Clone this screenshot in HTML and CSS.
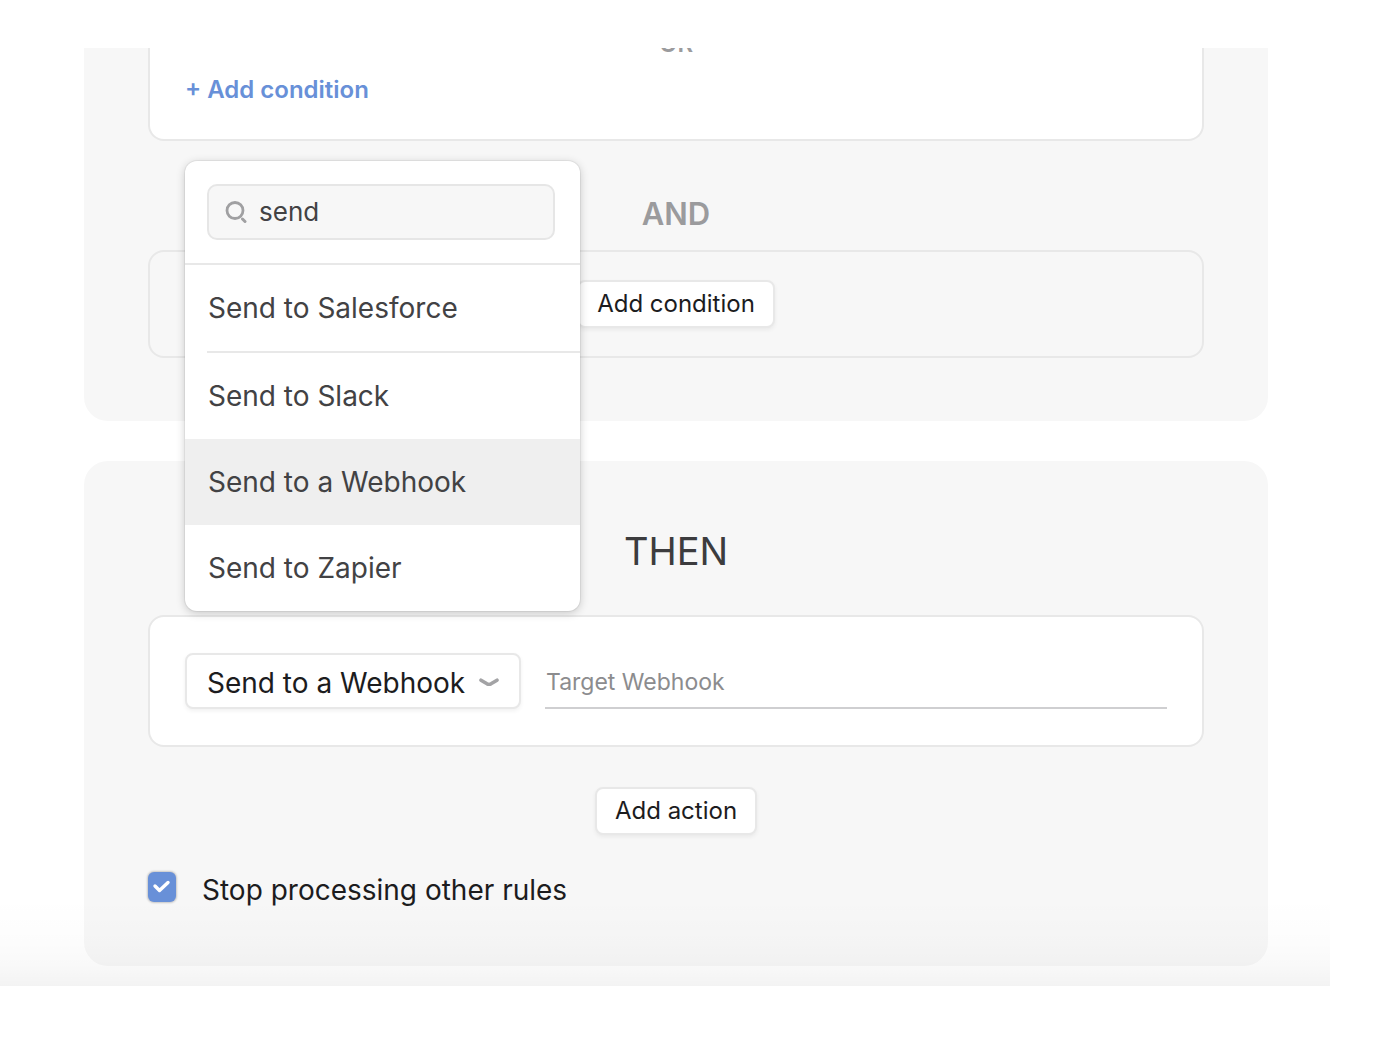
FILE: index.html
```
<!DOCTYPE html>
<html lang="en">
<head>
    <meta charset="UTF-8">
    <meta name="viewport" content="width=device-width, initial-scale=1.0">
    <title>Rule editor</title>
    <link rel="stylesheet" href="styles.css">
</head>
<body>
    <main class="page">
        <section class="panel panel-if">
            <div class="card conditions">
                <div class="or">OR</div>
                <a class="add-link" href="#">+ Add condition</a>
            </div>
            <div class="and">AND</div>
            <div class="card empty">
                <button class="btn" type="button">Add condition</button>
            </div>
        </section>

        <section class="panel panel-then">
            <h2>THEN</h2>
            <div class="card action">
                <div class="picker">
                    <select class="picker-select" aria-label="Action">
                        <option>Send to a Webhook</option>
                        <option>Send to Salesforce</option>
                        <option>Send to Slack</option>
                        <option>Send to Zapier</option>
                    </select>
                    <svg class="chevron" viewBox="0 0 20 10" width="20" height="10">
                        <path d="M2 2.2 L8 5.8 Q10 6.8 12 5.8 L18 2.2" fill="none" stroke="#a3a3a5" stroke-width="3.6" stroke-linecap="round" stroke-linejoin="round"/>
                    </svg>

                    <div class="menu">
                        <div class="menu-search">
                            <svg class="search-icon" viewBox="0 0 22 24" width="22" height="24">
                                <circle cx="10" cy="10.5" r="8" fill="none" stroke="#a0a0a2" stroke-width="2.8"/>
                                <path d="M17.5 19 L20 21.5" stroke="#a0a0a2" stroke-width="3" stroke-linecap="round"/>
                            </svg>
                            <input type="text" value="send" aria-label="Search actions">
                        </div>
                        <ul class="menu-list">
                            <li><button type="button">Send to Salesforce</button></li>
                            <li><button type="button">Send to Slack</button></li>
                            <li class="active"><button type="button">Send to a Webhook</button></li>
                            <li><button type="button">Send to Zapier</button></li>
                        </ul>
                    </div>
                </div>
                <input class="target" type="text" placeholder="Target Webhook" aria-label="Target Webhook">
            </div>
            <button class="btn" type="button">Add action</button>
            <div class="stop">
                <span class="check">
                    <input type="checkbox" id="stop" checked>
                    <svg viewBox="0 0 28 30" width="28" height="30">
                        <path d="M7 14 L11.5 18.5 L20 10.5" fill="none" stroke="#fff" stroke-width="3.4" stroke-linecap="round" stroke-linejoin="round"/>
                    </svg>
                </span>
                <label for="stop">Stop processing other rules</label>
            </div>
        </section>
    </main>
</body>
</html>
```
FILE: styles.css
```
* {
    box-sizing: border-box;
}

body {
    margin: 0;
    background: #fff;
    color: #1c1c1e;
    font-family: Inter, "Liberation Sans", sans-serif;
    font-size: 28px;
}

button,
input,
select {
    font: inherit;
    color: inherit;
}

.page {
    position: relative;
    overflow: hidden;
    margin: 48px 62px 54px 0;
    padding: 0 62px 20px 84px;
}

/* fade at the bottom edge of the scroll area */
.page::after {
    content: "";
    position: absolute;
    left: 0;
    right: 0;
    bottom: 0;
    height: 88px;
    background: linear-gradient(rgba(0, 0, 0, 0), rgba(0, 0, 0, 0.01) 50%, rgba(0, 0, 0, 0.024) 75%, rgba(0, 0, 0, 0.047));
    pointer-events: none;
}

.panel {
    display: flex;
    flex-direction: column;
    align-items: center;
    padding: 0 64px;
    background: #f7f7f7;
    border-radius: 24px;
}

.panel-if {
    margin-top: -24px;
    padding-bottom: 63px;
    margin-bottom: 40px;
}

.panel-then {
    padding-top: 64px;
    padding-bottom: 56px;
}

.card {
    width: 100%;
    background: #fff;
    border: 2px solid #e8e8e8;
    border-radius: 16px;
}

.conditions {
    border-top: none;
    border-radius: 0 0 16px 16px;
    padding: 0 35px 33px;
}

.or {
    height: 50px;
    line-height: 40px;
    text-align: center;
    font-size: 24px;
    font-weight: 600;
    color: #9b9b9d;
}

.add-link {
    display: block;
    line-height: 32px;
    font-size: 24px;
    font-weight: 600;
    color: #6890d8;
    text-decoration: none;
}

.and {
    padding: 53px 0 16px;
    line-height: 40px;
    font-size: 31px;
    font-weight: 600;
    color: #9b9b9d;
}

.empty {
    display: flex;
    justify-content: center;
    padding: 28px;
    background: none;
}

.btn {
    height: 48px;
    padding: 0 18px 2px;
    font-size: 24px;
    background: #fff;
    border: 2px solid #e8e8e8;
    border-radius: 8px;
    box-shadow: 0 2px 4px rgba(0, 0, 0, 0.06);
    cursor: pointer;
}

h2 {
    margin: 0 0 38px;
    line-height: 52px;
    font-size: 38px;
    font-weight: 400;
    color: #3c3c3e;
}

.action {
    display: flex;
    align-items: center;
    gap: 24px;
    padding: 36px 35px;
    margin-bottom: 40px;
}

.picker {
    position: relative;
}

.picker-select {
    display: block;
    appearance: none;
    width: 336px;
    height: 56px;
    padding: 4px 48px 0 20px;
    background: #fff;
    border: 2px solid #e8e8e8;
    border-radius: 8px;
    box-shadow: 0 2px 4px rgba(0, 0, 0, 0.06);
}

.chevron {
    position: absolute;
    right: 22px;
    top: 25px;
    pointer-events: none;
}

.target {
    flex: 1;
    min-width: 0;
    height: 56px;
    padding: 4px 1px 0;
    font-size: 23px;
    background: none;
    border: none;
    border-bottom: 2px solid #cfcfd1;
    border-radius: 0;
}

.target::placeholder {
    color: #8c8c8e;
}

.menu {
    position: absolute;
    left: 0;
    bottom: 100%;
    width: 395px;
    margin-bottom: 42px;
    overflow: hidden;
    background: #fff;
    border-radius: 12px;
    color: #424244;
    box-shadow: 0 0 0 1px rgba(0, 0, 0, 0.05), 0 2px 10px rgba(0, 0, 0, 0.2);
}

.menu-search {
    display: flex;
    align-items: center;
    gap: 12px;
    height: 56px;
    margin: 23px 25px 23px 22px;
    padding: 0 16px;
    background: #f7f7f7;
    border: 2px solid #e6e6e6;
    border-radius: 10px;
}

.search-icon {
    flex: none;
}

.menu-search input {
    flex: 1;
    min-width: 0;
    padding: 0 0 2px;
    font-size: 26px;
    background: none;
    border: none;
    outline: none;
}

.menu-list {
    margin: 0;
    padding: 0;
    list-style: none;
    border-top: 2px solid #e8e8e8;
}

.menu-list button {
    display: block;
    width: 100%;
    height: 86px;
    padding: 0 23px;
    text-align: left;
    background: none;
    border: none;
    cursor: pointer;
}

.menu-list li:first-child::after {
    content: "";
    display: block;
    height: 2px;
    margin-left: 22px;
    background: #e8e8e8;
}

.menu-list .active {
    background: #efefef;
}

.stop {
    display: flex;
    align-items: flex-start;
    gap: 26px;
    width: 100%;
    margin-top: 35px;
    line-height: 40px;
}

.check {
    position: relative;
    display: flex;
    margin-top: 2px;
}

.check input {
    appearance: none;
    width: 28px;
    height: 30px;
    margin: 0;
    background: #6890d8;
    border-radius: 6px;
    box-shadow: 0 0 2px 1px rgba(0, 0, 0, 0.2);
}

.check svg {
    position: absolute;
    left: 0;
    top: 0;
    pointer-events: none;
}
```
